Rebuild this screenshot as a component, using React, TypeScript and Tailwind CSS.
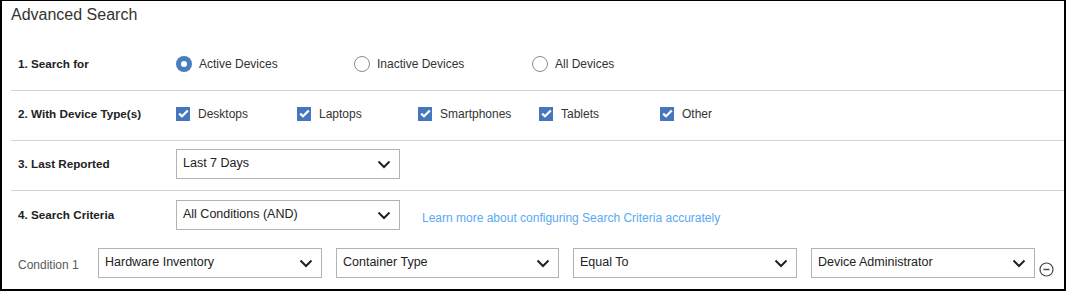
import { ReactNode } from 'react';

const Chevron = () => (
  <svg width="14" height="9" viewBox="0 0 14 9" className="shrink-0">
    <path d="M1.5 1.5 L7 7 L12.5 1.5" fill="none" stroke="#222" strokeWidth="2" />
  </svg>
);

function Select({ value, w }: { value: string; w: string }) {
  return (
    <div className={`${w} h-[30px] border border-[#b3b3b3] bg-white flex items-start justify-between pl-[6px] pr-[8px] pt-[5px] shrink-0`}>
      <span className="text-[12.5px] text-[#222] leading-[16px]">{value}</span>
      <span className="pt-[5px]"><Chevron /></span>
    </div>
  );
}

function Radio({ checked, label }: { checked?: boolean; label: string }) {
  return (
    <div className="w-[178px] flex items-center gap-[7px] shrink-0">
      {checked ? (
        <span className="w-[16px] h-[16px] rounded-full bg-[#4a7cc0] flex items-center justify-center">
          <span className="w-[6px] h-[6px] rounded-full bg-white" />
        </span>
      ) : (
        <span className="w-[16px] h-[16px] rounded-full border border-[#8a8a8a] bg-white" />
      )}
      <span className="text-[12px] text-[#333]">{label}</span>
    </div>
  );
}

function Check({ label }: { label: string }) {
  return (
    <div className="w-[121px] flex items-center gap-[8px] shrink-0">
      <span className="w-[14px] h-[14px] bg-[#4676bd] flex items-center justify-center">
        <svg width="11" height="9" viewBox="0 0 11 9">
          <path d="M1.2 4.6 L4 7.3 L9.8 1.4" fill="none" stroke="#fff" strokeWidth="2.2" />
        </svg>
      </span>
      <span className="text-[12px] text-[#333]">{label}</span>
    </div>
  );
}

function Row({ label, children, last, text }: { label: string; children: ReactNode; last?: boolean; text?: boolean }) {
  return (
    <div className={`h-[50px] flex items-center pl-[7px] ${text ? 'pb-[4px]' : 'pb-[3px]'} ${last ? '' : 'border-b border-[#d4d4d4]'}`}>
      <div className="w-[158px] shrink-0 text-[11.7px] font-bold text-[#222]">{label}</div>
      {children}
    </div>
  );
}

export default function App() {
  return (
    <div className="w-[1066px] h-[291px] bg-white border-t border-l-2 border-r-2 border-b-2 border-black overflow-hidden" style={{ fontFamily: '"Liberation Sans", Arial, sans-serif' }}>
      <div className="pl-[9px] h-[40px] pt-[2px] text-[16px] text-[#333]">Advanced Search</div>
      <div className="pl-[9px]">
        <Row label="1. Search for" text>
          <Radio checked label="Active Devices" />
          <Radio label="Inactive Devices" />
          <Radio label="All Devices" />
        </Row>
        <Row label="2. With Device Type(s)" text>
          <Check label="Desktops" />
          <Check label="Laptops" />
          <Check label="Smartphones" />
          <Check label="Tablets" />
          <Check label="Other" />
        </Row>
        <Row label="3. Last Reported">
          <Select value="Last 7 Days" w="w-[224px]" />
        </Row>
        <Row label="4. Search Criteria" last>
          <Select value="All Conditions (AND)" w="w-[224px]" />
          <a className="ml-[22px] mt-[6px] text-[12px] text-[#58aaf4]">Learn more about configuring Search Criteria accurately</a>
        </Row>
        <div className="flex items-center pl-[7px] h-[30px] mt-[7px]">
          <div className="w-[80px] shrink-0 text-[12px] text-[#5a5a5a] pt-[4px]">Condition 1</div>
          <div className="flex gap-[14px]">
            <Select value="Hardware Inventory" w="w-[224px]" />
            <Select value="Container Type" w="w-[223px]" />
            <Select value="Equal To" w="w-[224px]" />
            <Select value="Device Administrator" w="w-[224px]" />
          </div>
          <svg width="15" height="15" viewBox="0 0 15 15" className="ml-[4px] mt-[12px]">
            <circle cx="7.5" cy="7.5" r="6.5" fill="none" stroke="#444" strokeWidth="1.2" />
            <path d="M4.5 7.5 H10.5" stroke="#444" strokeWidth="1.4" />
          </svg>
        </div>
      </div>
    </div>
  );
}
